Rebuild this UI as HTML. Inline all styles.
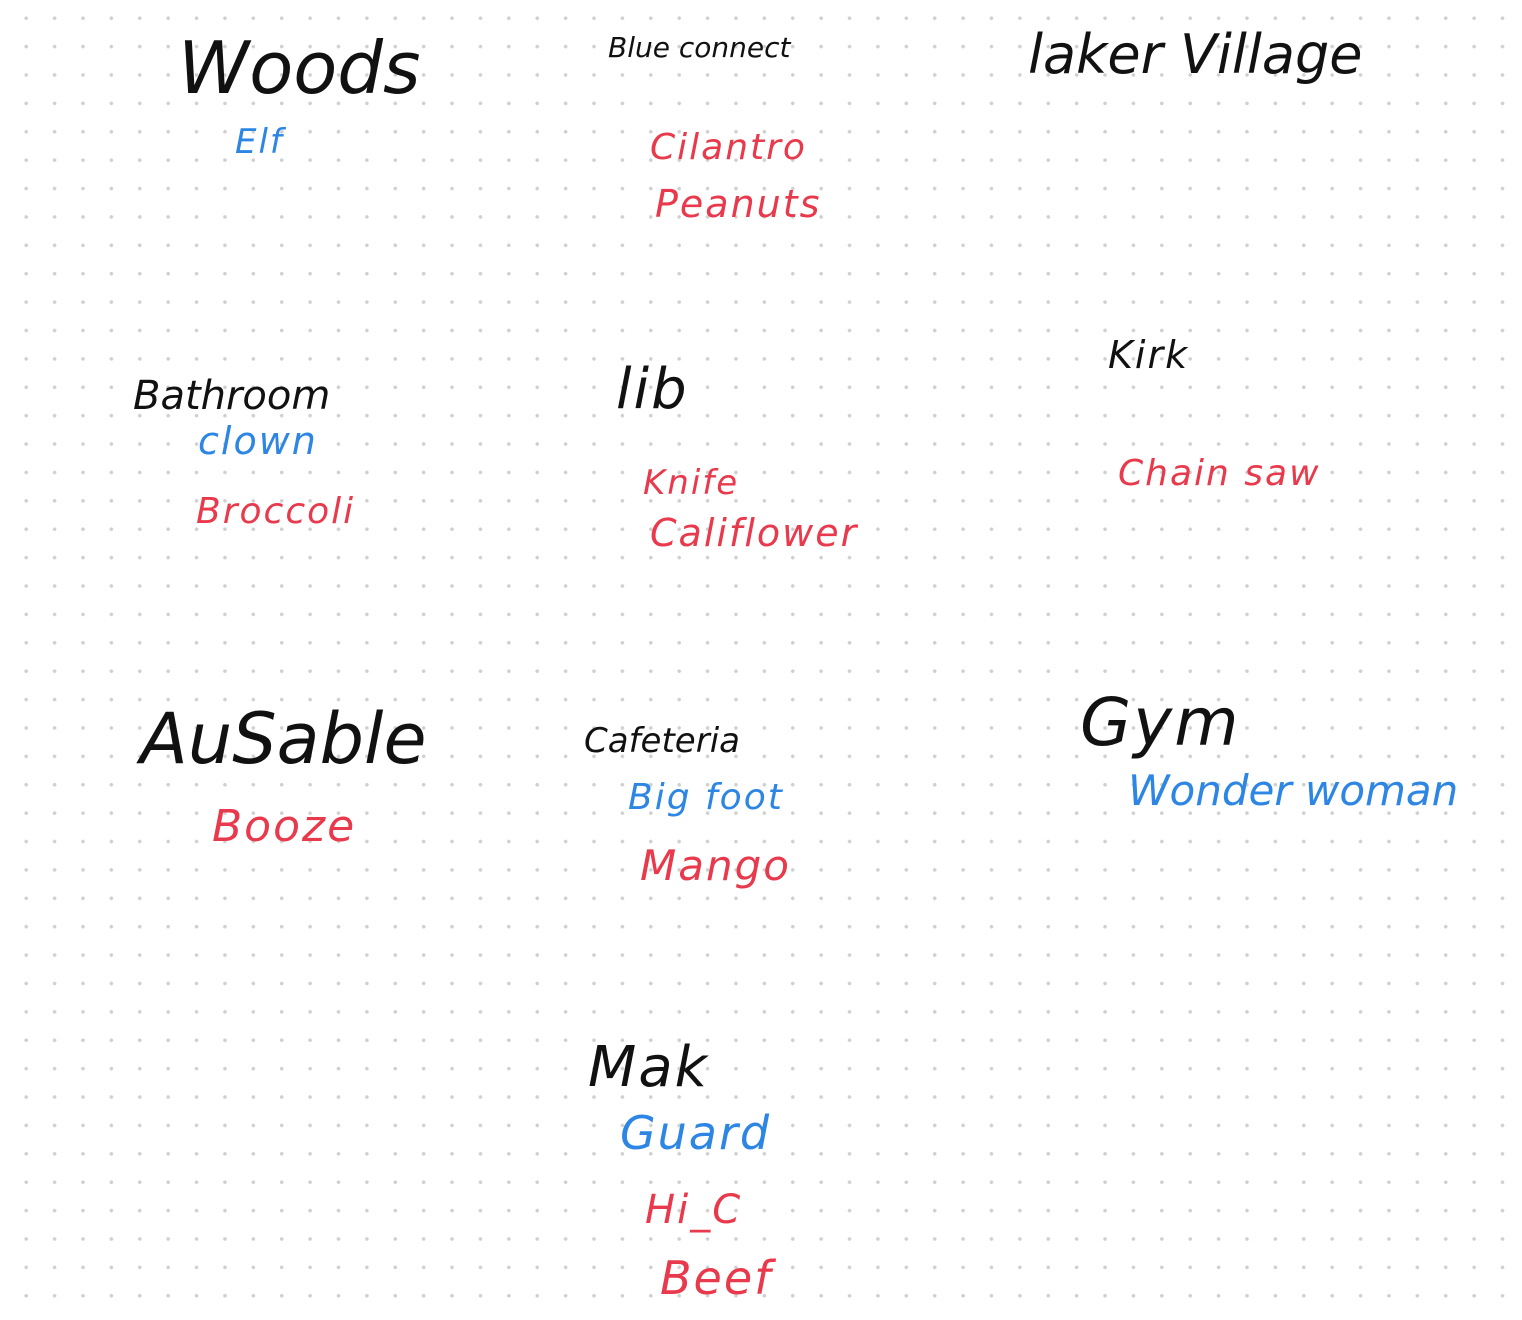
<!DOCTYPE html>
<html><head><meta charset="utf-8"><style>
html,body{margin:0;padding:0}
body{width:1522px;height:1320px;position:relative;overflow:hidden;background:#fff;
background-image:radial-gradient(circle,#cfcfcf 1.5px,transparent 2.1px);
background-size:28.4px 28.4px;background-position:12px 4px;
font-family:"DejaVu Sans","Liberation Sans",sans-serif;font-weight:300}
div{position:absolute;white-space:nowrap;line-height:1;font-style:italic;letter-spacing:2px}
.k{color:#111}.b{color:#2d86e3}.r{color:#e83a4c}
</style></head><body>
<div class="k" style="left:178px;top:32px;font-size:72px;letter-spacing:0">Woods</div>
<div class="b" style="left:235px;top:125px;font-size:34px">Elf</div>
<div class="k" style="left:608px;top:34px;font-size:28px;letter-spacing:0">Blue connect</div>
<div class="r" style="left:650px;top:130px;font-size:36px">Cilantro</div>
<div class="r" style="left:655px;top:185px;font-size:38px">Peanuts</div>
<div class="k" style="left:1028px;top:28px;font-size:54px;letter-spacing:0">laker Village</div>
<div class="k" style="left:133px;top:376px;font-size:40px;letter-spacing:0">Bathroom</div>
<div class="b" style="left:198px;top:422px;font-size:38px">clown</div>
<div class="r" style="left:196px;top:494px;font-size:36px">Broccoli</div>
<div class="k" style="left:616px;top:362px;font-size:56px">lib</div>
<div class="r" style="left:643px;top:466px;font-size:34px">Knife</div>
<div class="r" style="left:650px;top:514px;font-size:38px">Califlower</div>
<div class="k" style="left:1108px;top:336px;font-size:38px">Kirk</div>
<div class="r" style="left:1118px;top:456px;font-size:36px">Chain saw</div>
<div class="k" style="left:140px;top:704px;font-size:70px;letter-spacing:0">AuSable</div>
<div class="r" style="left:212px;top:805px;font-size:44px">Booze</div>
<div class="k" style="left:584px;top:724px;font-size:34px;letter-spacing:0">Cafeteria</div>
<div class="b" style="left:628px;top:780px;font-size:36px">Big foot</div>
<div class="r" style="left:640px;top:845px;font-size:42px">Mango</div>
<div class="k" style="left:1080px;top:690px;font-size:66px">Gym</div>
<div class="b" style="left:1128px;top:770px;font-size:42px;letter-spacing:0">Wonder woman</div>
<div class="k" style="left:588px;top:1040px;font-size:56px">Mak</div>
<div class="b" style="left:620px;top:1110px;font-size:46px">Guard</div>
<div class="r" style="left:645px;top:1190px;font-size:40px">Hi_C</div>
<div class="r" style="left:660px;top:1255px;font-size:46px">Beef</div>
</body></html>
